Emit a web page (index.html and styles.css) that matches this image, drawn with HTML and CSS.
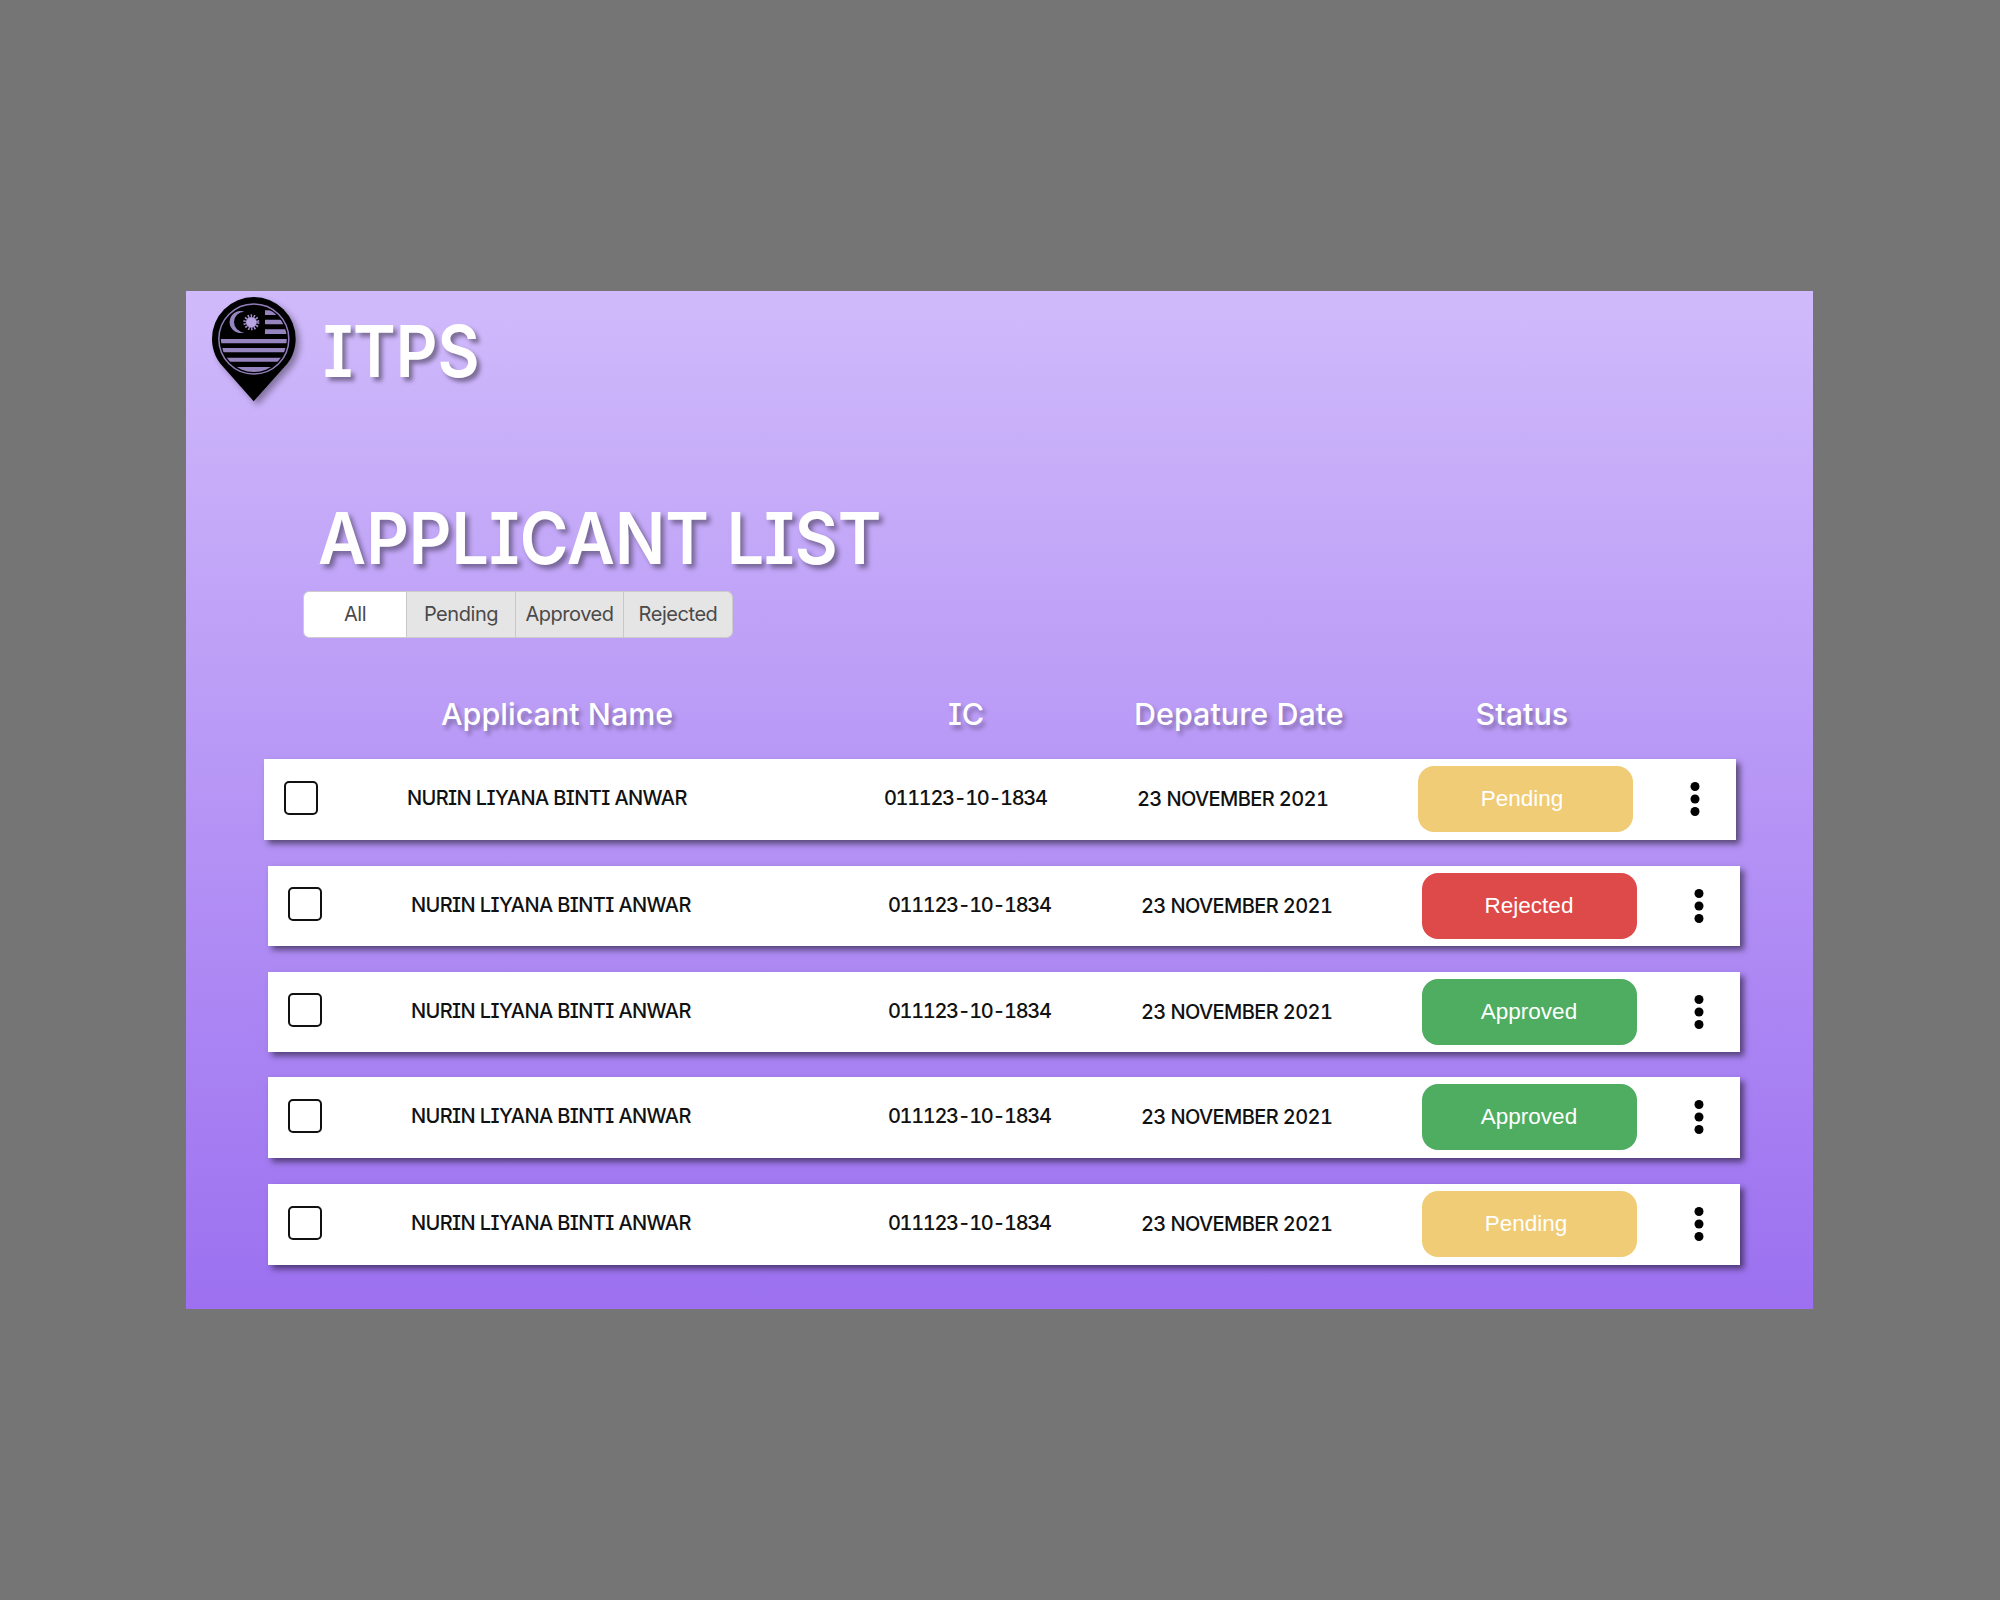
FILE: index.html
```html
<!DOCTYPE html>
<html lang="en">
<head>
<meta charset="utf-8">
<title>ITPS</title>
<link rel="stylesheet" href="styles.css">
</head>
<body>
<main class="screen">
  <header class="brand">
    <svg class="pin" viewBox="30 30 270 330">
      <defs><clipPath id="disc"><circle cx="161.5" cy="162" r="99"/></clipPath></defs>
      <path d="M161 349 L62 237 C45 215 36 190 36 161 A125.500 125 0 0 1 287 161 C287 190 278 215 261 237 Z"/>
      <circle cx="161.500" cy="162" r="105" fill="none" stroke="#8f7cb8" stroke-width="4.500"/>
      <g fill="#9684bf" clip-path="url(#disc)">
        <path d="M195 76h80v14h-80zM195 104h80v14h-80zM195 133h80v14h-80zM50 162h220v13H50zM50 189h220v13H50zM50 218h220v12H50zM50 246h220v18H50z"/>
        <path d="M133 80 A33 33 0 1 0 133 142 A31 31 0 0 1 133 80Z"/>
        <circle cx="154" cy="112" r="16" fill="#b8a4e2"/>
        <circle cx="154" cy="112" r="19" fill="none" stroke="#a08dca" stroke-width="10" stroke-dasharray="4.260 4.260"/>
      </g>
    </svg>
    <span class="brand-name">ITPS</span>
  </header>
  <h1 class="title">APPLICANT LIST</h1>
  <nav class="tabs">
    <span class="tab active">All</span><span class="tab">Pending</span><span class="tab">Approved</span><span class="tab">Rejected</span>
  </nav>
  <section class="grid head">
    <span class="h-name">Applicant Name</span><span class="h-ic">IC</span><span class="h-date">Depature Date</span><span class="h-status">Status</span>
  </section>
  <section class="list">
    <article class="grid row"><i class="check"></i><span class="name">NURIN LIYANA BINTI ANWAR</span><span class="ic">011123-10-1834</span><span class="date">23 NOVEMBER 2021</span><span class="badge pending">Pending</span><svg class="dots" viewBox="0 0 10 36"><circle cx="5" cy="5.500" r="4.500"/><circle cx="5" cy="18" r="4.500"/><circle cx="5" cy="30.500" r="4.500"/></svg></article>
    <article class="grid row"><i class="check"></i><span class="name">NURIN LIYANA BINTI ANWAR</span><span class="ic">011123-10-1834</span><span class="date">23 NOVEMBER 2021</span><span class="badge rejected">Rejected</span><svg class="dots" viewBox="0 0 10 36"><circle cx="5" cy="5.500" r="4.500"/><circle cx="5" cy="18" r="4.500"/><circle cx="5" cy="30.500" r="4.500"/></svg></article>
    <article class="grid row"><i class="check"></i><span class="name">NURIN LIYANA BINTI ANWAR</span><span class="ic">011123-10-1834</span><span class="date">23 NOVEMBER 2021</span><span class="badge approved">Approved</span><svg class="dots" viewBox="0 0 10 36"><circle cx="5" cy="5.500" r="4.500"/><circle cx="5" cy="18" r="4.500"/><circle cx="5" cy="30.500" r="4.500"/></svg></article>
    <article class="grid row"><i class="check"></i><span class="name">NURIN LIYANA BINTI ANWAR</span><span class="ic">011123-10-1834</span><span class="date">23 NOVEMBER 2021</span><span class="badge approved">Approved</span><svg class="dots" viewBox="0 0 10 36"><circle cx="5" cy="5.500" r="4.500"/><circle cx="5" cy="18" r="4.500"/><circle cx="5" cy="30.500" r="4.500"/></svg></article>
    <article class="grid row"><i class="check"></i><span class="name">NURIN LIYANA BINTI ANWAR</span><span class="ic">011123-10-1834</span><span class="date">23 NOVEMBER 2021</span><span class="badge pending">Pending</span><svg class="dots" viewBox="0 0 10 36"><circle cx="5" cy="5.500" r="4.500"/><circle cx="5" cy="18" r="4.500"/><circle cx="5" cy="30.500" r="4.500"/></svg></article>
  </section>
</main>
</body>
</html>
```
FILE: styles.css
```css
* { box-sizing: border-box; }
body {
  margin: 0;
  padding: 291px 187px 0 186px;
  min-height: 1600px;
  background: #757575;
  font-family: Inter, "Noto Sans", sans-serif;
  font-feature-settings: "cv08", "tnum";
}
.screen {
  width: 1627px;
  height: 1018px;
  background: linear-gradient(180deg, #d0bafb 0%, #9c70f0 100%);
}
.brand {
  display: flex;
  height: 120px;
  padding: 4px 0 0 24px;
}
.pin {
  width: 90px;
  height: 110px;
  filter: drop-shadow(4px 4px 3px rgba(0, 0, 0, 0.35));
}
.brand-name, .title {
  color: #fff;
  font-size: 71px;
  line-height: 80px;
  white-space: nowrap;
  text-shadow: 4px 4px 5px rgba(0, 0, 0, 0.4);
  transform-origin: 0 50%;
}
.brand-name {
  margin: 16px 0 0 23px;
  font-weight: 600;
  transform: scaleX(0.912);
}
.title {
  margin: 87px 0 0 132px;
  font-weight: 560;
  transform: scaleX(0.932);
}
.tabs {
  display: grid;
  grid-template-columns: 103px 109px 108px 108px;
  width: 430px;
  height: 47px;
  margin: 13px 0 0 117px;
  border: 1px solid #ccc;
  border-radius: 6px;
  overflow: hidden;
}
.tab {
  border-right: 1px solid #c8c8c8;
  background: #e5e5e5;
  color: #4a4a4a;
  font-size: 20px;
  line-height: 45px;
  letter-spacing: -0.450px;
  text-align: center;
}
.tab:last-child { border-right: 0; }
.tab.active { background: #fff; }
.grid {
  display: grid;
  grid-template-columns: 123px 477px 253px 280.500px 215px 1fr;
}
.head {
  height: 121px;
  margin-left: 98px;
  padding-top: 56px;
  color: #fff;
  font-size: 30.500px;
  font-weight: 500;
  line-height: 40px;
  white-space: nowrap;
  text-shadow: 3px 4px 4px rgba(0, 0, 0, 0.3);
}
.h-name { grid-column: 2; padding-left: 34px; }
.h-ic { padding-left: 64px; }
.h-date { margin-left: -3px; }
.h-status { padding-left: 58px; }
.row {
  align-items: center;
  width: 1472px;
  height: 80px;
  margin: 0 0 26px 82px;
  padding: 0 0 1px 20px;
  background: #fff;
  box-shadow: 4px 4px 6px rgba(0, 0, 0, 0.5);
  color: #111;
  font-size: 20px;
  font-weight: 500;
  letter-spacing: -0.600px;
  white-space: nowrap;
}
.row:nth-child(1) { height: 81px; margin-left: 78px; }
.row:nth-child(3) { margin-bottom: 25px; }
.row:nth-child(4), .row:nth-child(5) { height: 81px; }
.check {
  width: 34px;
  height: 34px;
  margin-bottom: 3px;
  border: 2px solid #111;
  border-radius: 5px;
}
.name, .ic { padding-bottom: 2px; }
.ic { letter-spacing: -1.350px; }
.badge {
  height: 66px;
  border-radius: 16px;
  color: #fff;
  font-family: "Liberation Sans", Arial, sans-serif;
  font-size: 22.500px;
  font-weight: 400;
  letter-spacing: 0;
  line-height: 66px;
  text-align: center;
}
.pending { background: #f0cc76; padding-right: 6px; }
.rejected { background: #de4949; }
.approved { background: #4ead60; }
.dots { width: 10px; height: 36px; margin-left: 57px; }
```
